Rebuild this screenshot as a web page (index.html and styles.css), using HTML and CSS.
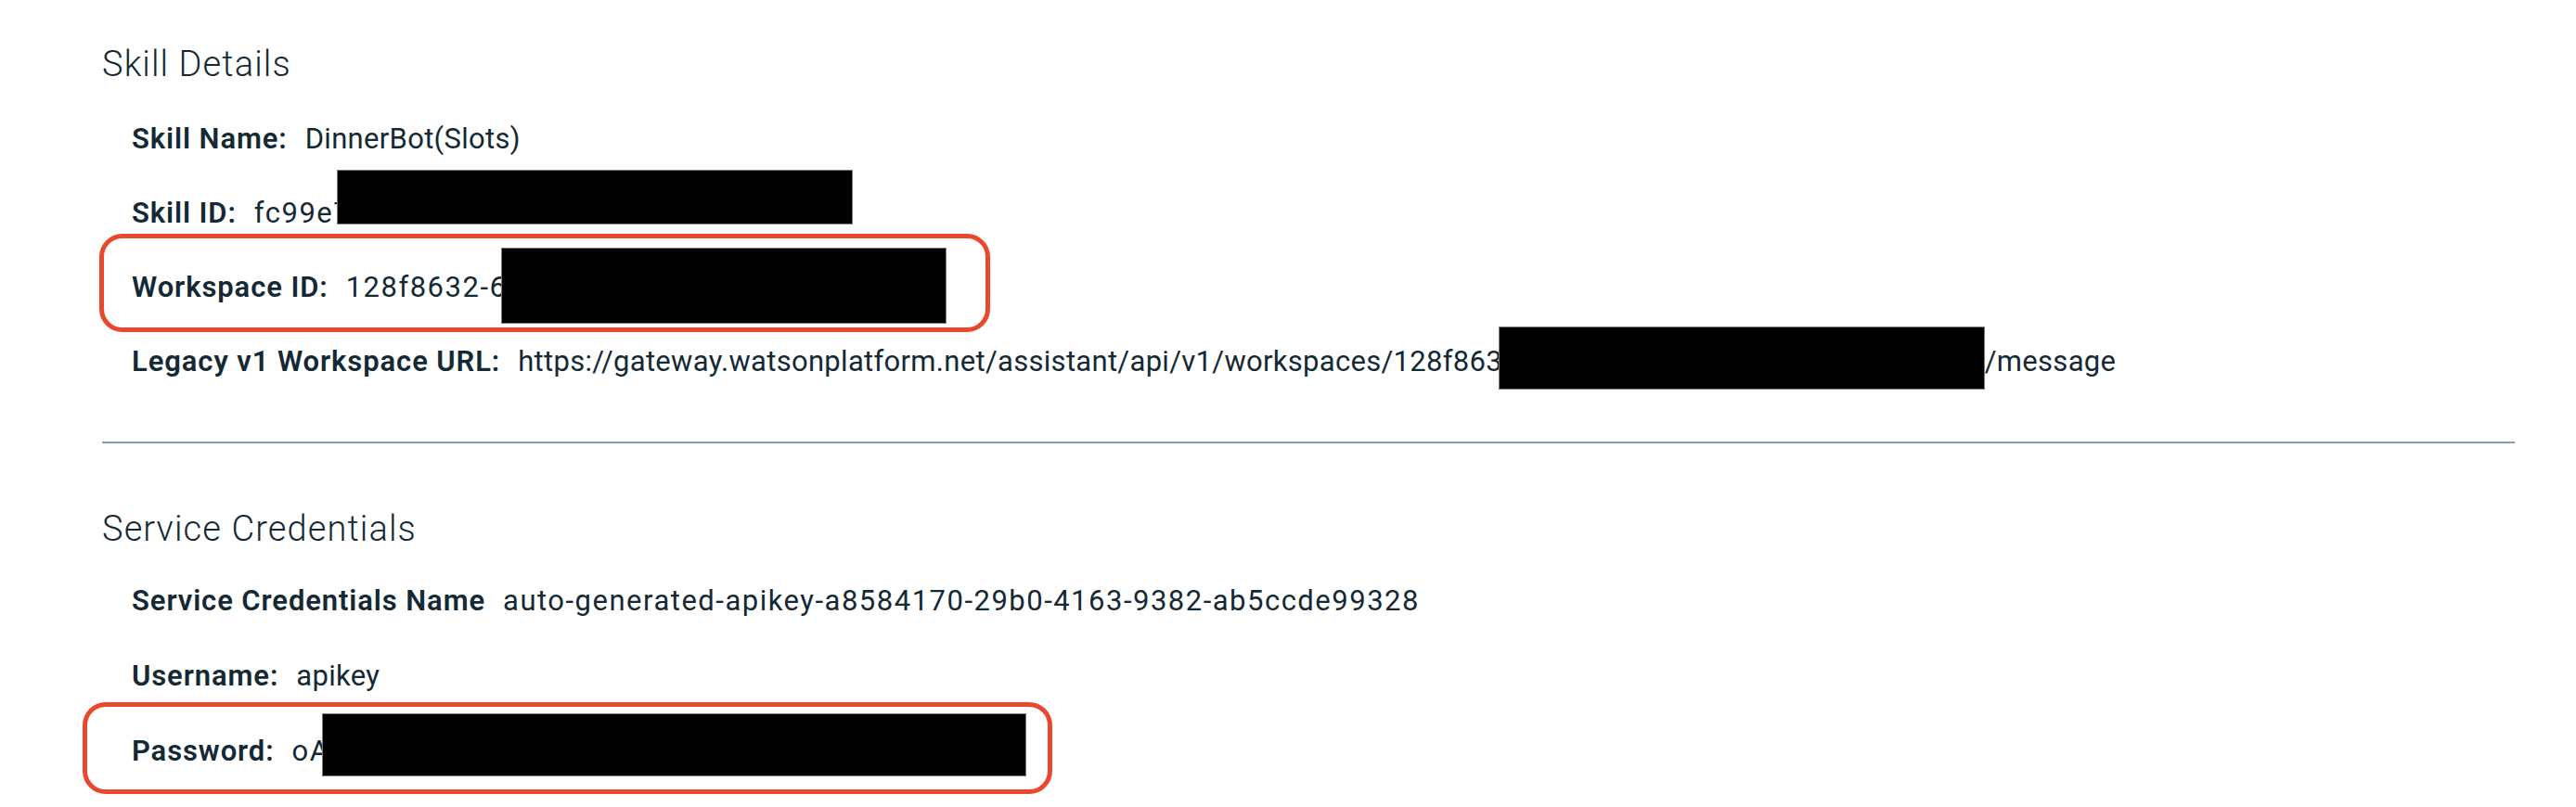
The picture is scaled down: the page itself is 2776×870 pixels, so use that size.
FILE: index.html
```html
<!DOCTYPE html>
<html lang="en">
<head>
<meta charset="utf-8">
<title>Skill Details</title>
<link rel="stylesheet" href="styles.css">
</head>
<body>
<main class="page">
  <section class="section section--skill">
    <h2 class="section-title">Skill Details</h2>
    <dl class="fields">
      <div class="field">
        <dt class="field-label">Skill Name:</dt>
        <dd class="field-value">DinnerBot(Slots)</dd>
      </div>
      <div class="field">
        <dt class="field-label">Skill ID:</dt>
        <dd class="field-value field-value--id">fc99e7<span class="redact redact--skill"></span></dd>
      </div>
      <div class="field">
        <dt class="field-label">Workspace ID:</dt>
        <dd class="field-value field-value--id">128f8632-6<span class="redact redact--workspace"></span></dd>
        <span class="callout callout--workspace"></span>
      </div>
      <div class="field">
        <dt class="field-label">Legacy v1 Workspace URL:</dt>
        <dd class="field-value">https://gateway.watsonplatform.net/assistant/api/v1/workspaces/128f8632<span class="redact redact--url"></span>/message</dd>
      </div>
    </dl>
  </section>

  <hr class="divider">

  <section class="section section--credentials">
    <h2 class="section-title">Service Credentials</h2>
    <dl class="fields">
      <div class="field">
        <dt class="field-label">Service Credentials Name</dt>
        <dd class="field-value field-value--id">auto-generated-apikey-a8584170-29b0-4163-9382-ab5ccde99328</dd>
      </div>
      <div class="field">
        <dt class="field-label">Username:</dt>
        <dd class="field-value">apikey</dd>
      </div>
      <div class="field">
        <dt class="field-label">Password:</dt>
        <dd class="field-value field-value--id">oA<span class="redact redact--password"></span></dd>
        <span class="callout callout--password"></span>
      </div>
    </dl>
  </section>
</main>
</body>
</html>
```

FILE: styles.css
```css
* {
  box-sizing: border-box;
}

html,
body {
  margin: 0;
  background: #ffffff;
}

body {
  font-family: "Roboto", "Liberation Sans", sans-serif;
  color: #152935;
}

.page {
  min-height: 870px;
  padding: 45px 66px 0 110px;
}

.section-title {
  margin: 0;
  font-size: 38px;
  font-weight: 300;
  line-height: 48px;
  letter-spacing: 1.1px;
  color: #152935;
}

.fields {
  margin: 37px 0 0 0;
  padding-left: 32px;
  display: flex;
  flex-direction: column;
  row-gap: 40px;
}

.section--credentials .fields {
  margin-top: 34px;
  row-gap: 41px;
}

.field {
  position: relative;
  display: flex;
  align-items: baseline;
  column-gap: 19px;
  height: 40px;
  font-size: 31px;
  line-height: 40px;
  white-space: nowrap;
}

.field-label {
  margin: 0;
  font-weight: 600;
  letter-spacing: 0.9px;
}

.field-value {
  margin: 0;
  font-weight: 400;
  letter-spacing: 0.3px;
}

.field-value--id {
  letter-spacing: 1.5px;
}

.redact {
  display: inline-block;
  vertical-align: baseline;
  background: #000000;
  border: 1px solid #7d7d7d;
}

.redact--skill {
  width: 556px;
  height: 59px;
  margin: -30px 0 -2px -15px;
}

.redact--workspace {
  width: 480px;
  height: 82px;
  margin: -30px 0 -29px -6px;
}

.redact--url {
  width: 524px;
  height: 68px;
  margin: -30px 0 -20px -22px;
}

.redact--password {
  width: 759px;
  height: 68px;
  margin: -30px 0 -17px -8px;
}

.callout {
  position: absolute;
  border: 5px solid #ea482c;
  border-radius: 25px;
  pointer-events: none;
}

.callout--workspace {
  left: -35px;
  top: -38px;
  width: 960px;
  height: 106px;
}

.callout--password {
  left: -53px;
  top: -33px;
  width: 1045px;
  height: 99px;
}

.divider {
  margin: 66px 0 0 0;
  height: 2px;
  border: 0;
  background: #8c9ba5;
}

.section--credentials .section-title {
  margin-top: 68px;
}
```
